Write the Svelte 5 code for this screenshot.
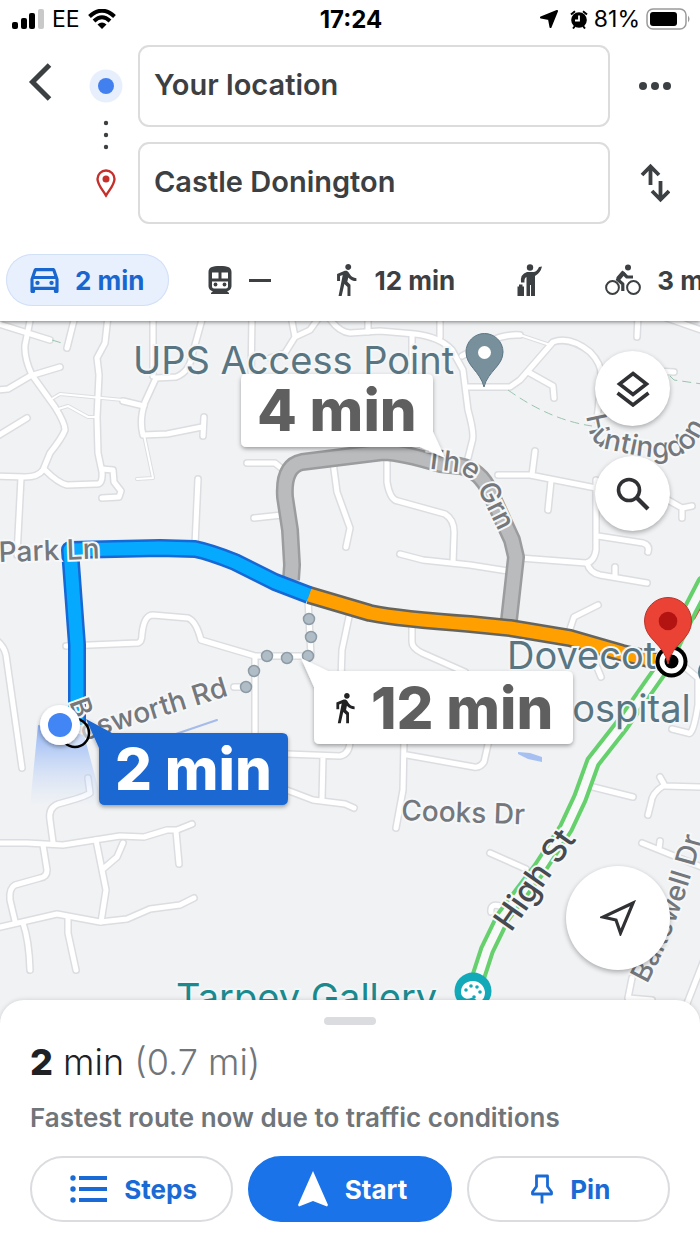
<script>
  let origin = $state('Your location');
  let destination = $state('Castle Donington');
  let mode = $state('drive');

  const modes = [
    { id: 'drive', name: 'Drive', time: '2 min' },
    { id: 'transit', name: 'Transit', time: '—' },
    { id: 'walk', name: 'Walk', time: '12 min' },
    { id: 'ride', name: 'Ride service', time: '' },
    { id: 'cycle', name: 'Cycle', time: '3 min' }
  ];

  const walker =
    'M13.5 5.5c1.1 0 2-.9 2-2s-.9-2-2-2-2 .9-2 2 .9 2 2 2zM9.8 8.9L7 23h2.1l1.8-8 2.1 2v6h2v-7.5l-2.1-2 .6-3C14.8 12 16.8 13 19 13v-2c-1.9 0-3.5-1-4.3-2.4l-1-1.6c-.4-.6-1-1-1.7-1-.3 0-.5.1-.8.1L6 8.3V13h2V9.6l1.8-.7';

  const streets = [
    'M-4 323L50 340',
    'M31 316L25 345Q24 358 32 375L55 407Q65 423 65 430Q62 438 50 453L43 470Q38 477 25 477L-4 476',
    'M75 316L67 348',
    'M-4 390L8 389L30 376L60 367',
    'M108 316L105 343L97 358L99 375L97 417L98 453L102 472Q103 485 96 484L67 485Q58 483 45 470',
    'M102 469L113 470L114 482L121 491L119 497L102 498',
    'M-4 437L27 418',
    'M21 478L17 555',
    'M153 316V376',
    'M203 316L193 352Q190 372 176 377L156 378L145 402Q139 420 143 435L167 434L202 427M204 417L203 436',
    'M123 401L144 406',
    'M198 479L195 545',
    'M252 316L251 380',
    'M291 316L295 337L310 330L320 316M295 337L285 353L270 358',
    'M328 316Q338 332 350 333L380 331L415 334Q440 337 452 350L463 370L468 410Q475 435 472 442L468 458',
    'M368 316V332M440 316V337M412 335V380',
    'M247 463H275L286 472',
    'M254 518L282 515',
    'M333 462L337 492L350 528L346 547',
    'M387 455V482Q390 500 398 501L445 514Q455 520 454 535L453 563',
    'M468 387H510L520 380L553 342Q570 336 590 352Q603 365 601 380L597 420',
    'M462 356L490 341Q505 334 520 335',
    'M528 372L553 386L554 398',
    'M638 316L637 337M661 316L704 331M655 371L674 372',
    'M498 475H530L596 488M535 451L532 475M551 481L548 510',
    'M596 480V550Q594 562 586 563L520 558M598 536L643 543Q650 545 648 552',
    'M668 500L682 508L692 506M682 508V518',
    'M400 554L423 560L470 565L508 571',
    'M587 563Q590 573 600 575L647 583M615 567V576',
    'M570 629L574 617L598 605M594 660L601 677',
    'M412 625V642Q412 648 422 653L465 672',
    'M66 646L138 643Q142 642 142 634Q144 615 153 615L188 618Q196 621 201 640L255 656H311L308 600M255 657V745',
    'M350 612L342 650L341 680M246 687H234',
    'M287 754L340 756Q350 754 350 740M323 757L322 800',
    'M284 789L313 800L345 804L354 808',
    'M404 740L403 790L396 828',
    'M407 755L474 767Q480 768 484 762L489 740',
    'M593 787L633 797',
    'M660 777L665 786L704 787M663 786Q652 793 651 803L648 815',
    'M686 668L698 678V705Q693 737 688 733L672 729',
    'M-4 640Q4 646 6 655L22 768',
    'M88 778L90 793Q85 797 58 804Q48 808 50 820L53 842',
    'M-4 843L27 843L63 845L120 836L144 837L167 830L177 830L192 824',
    'M43 845L47 870Q47 877 40 878L15 885Q9 888 10 900L15 921',
    'M-4 928L57 914L100 922L127 919L150 909L180 905L194 898',
    'M96 840L106 890L101 922M103 869L117 857L123 843M176 831L179 864',
    'M23 923Q29 940 30 970M68 917V933L76 970',
    'M490 853L526 869M642 843L704 868M660 841L659 849M491 912Q490 903 500 906',
    'M632 978L628 998L652 1000M704 960L686 1006'
  ];

  const lanes = [
    'M50 400L60 394L123 400',
    'M55 410L68 406L88 417H97',
    'M144 435L153 478L137 479',
    'M520 335L550 345',
    'M453 540L452 562'
  ];

  const greyRoute =
    'M291 580L292 565L290 530L285 497Q283 466 302 462L383 452Q400 452 440 464L460 466Q480 470 490 492L512 540L516 557L509 620';
  const blueRoute = 'M77 725V645L70 550L160 548L195 549Q210 552 235 562L275 582L309 595';
  const amberRoute = 'M309 595L370 613Q400 619 470 624L510 628L570 638L622 653L662 662';
  const highStreet = 'M704 583L690 610L662 668L622 725L593 762L580 798L566 828L540 868L503 917L487 950L474 990';

  const walkDots = [
    [309, 619],
    [311, 637],
    [308, 656],
    [287, 658],
    [267, 656],
    [254, 671],
    [246, 687]
  ];
</script>

<div class="screen">
  <header>
    <div class="status">
      <div class="status-left">
        <svg width="32" height="20" viewBox="0 0 32 20" aria-hidden="true">
          <rect x="0" y="13" width="6" height="7" rx="2" />
          <rect x="9" y="9" width="6" height="11" rx="2" />
          <rect x="17" y="4" width="6" height="16" rx="2" />
          <rect x="26" y="0" width="6" height="20" rx="2" fill="#c9c9c9" />
        </svg>
        <span>EE</span>
        <svg width="28" height="20" viewBox="0 0 28 20" fill="none" stroke="#000" stroke-width="4" aria-hidden="true">
          <path d="M1.500 7.500Q14-4 26.500 7.500" />
          <path d="M6 12Q14 4.500 22 12" />
          <path d="M9.500 15.500Q14 11.500 18.500 15.500L14 20Z" fill="#000" stroke="none" />
        </svg>
      </div>
      <strong>17:24</strong>
      <div class="status-right">
        <svg width="18" height="18" viewBox="0 0 18 18" aria-hidden="true"><path d="M17 1L10.500 17L9 9L1 7.500Z" stroke="#000" stroke-width="2" stroke-linejoin="round" /></svg>
        <svg width="18" height="19" viewBox="0 0 18 19" aria-hidden="true">
          <circle cx="9" cy="10" r="7.800" />
          <path d="M1 4.500L5 1.200M17 4.500L13 1.200M3 18.500L5 16M15 18.500L13 16" stroke="#000" stroke-width="2" />
          <path d="M9 5.500V10.500H5" fill="none" stroke="#fff" stroke-width="1.800" />
        </svg>
        <span>81%</span>
        <svg width="44" height="22" viewBox="0 0 44 22" aria-hidden="true">
          <rect x="1" y="1" width="39" height="20" rx="6" fill="none" stroke="#9a9a9a" stroke-width="1.500" />
          <rect x="4" y="4" width="27" height="14" rx="3" />
          <path d="M42 7.500Q45 11 42 14.500Z" fill="#9a9a9a" />
        </svg>
      </div>
    </div>

    <div class="directions">
      <button class="plain" aria-label="Back">
        <svg width="24" height="38" viewBox="0 0 24 38" fill="none" stroke="#3c4043" stroke-width="5"><path d="M21.500 2L4.500 19L21.500 36" /></svg>
      </button>
      <svg class="stops" width="34" height="136" viewBox="0 0 34 136" aria-hidden="true">
        <circle cx="17" cy="20" r="16.500" fill="#e8effc" />
        <circle cx="17" cy="20" r="8" fill="#4280f0" />
        <g fill="#3c4043">
          <circle cx="17" cy="57" r="2.200" /><circle cx="17" cy="69" r="2.200" /><circle cx="17" cy="81" r="2.200" />
        </g>
        <path d="M17 129.500C13 123 8.500 118.500 8.500 113A8.500 8.500 0 0 1 25.500 113C25.500 118.500 21 123 17 129.500Z" fill="none" stroke="#c5302b" stroke-width="2.400" />
        <circle cx="17" cy="113" r="3.500" fill="#c5302b" />
      </svg>
      <div class="fields">
        <input aria-label="Starting point" bind:value={origin} />
        <input aria-label="Destination" bind:value={destination} />
      </div>
      <div class="actions">
        <button class="plain" aria-label="More options">
          <svg width="34" height="10" viewBox="0 0 34 10" fill="#3c4043"><circle cx="5" cy="5" r="4" /><circle cx="17" cy="5" r="4" /><circle cx="29" cy="5" r="4" /></svg>
        </button>
        <button class="plain" aria-label="Swap start and destination">
          <svg width="30" height="40" viewBox="0 0 30 40" fill="none" stroke="#3c4043" stroke-width="3.800"><path d="M10.500 22V4M2 12L10.500 3.500L19 12M20.500 18V36M12 28L20.500 36.500L29 28" /></svg>
        </button>
      </div>
    </div>

    <nav aria-label="Travel mode">
      {#each modes as m}
        <button class="mode" class:active={mode === m.id} aria-label={m.name + ' ' + m.time} aria-pressed={mode === m.id} onclick={() => (mode = m.id)}>
          {#if m.id === 'drive'}
            <svg width="29" height="25" viewBox="3 5 18 16" fill="currentColor"><path d="M18.920 6.010C18.720 5.420 18.160 5 17.500 5h-11c-.66 0-1.210.42-1.420 1.010L3 12v8c0 .55.45 1 1 1h1c.55 0 1-.45 1-1v-1h12v1c0 .55.45 1 1 1h1c.55 0 1-.45 1-1v-8l-2.080-5.990zM6.850 7h10.290l1.080 3.110H5.770L6.850 7zM19 17H5v-5h14v5z" /><circle cx="7.500" cy="14.500" r="1.400" /><circle cx="16.500" cy="14.500" r="1.400" /></svg>
          {:else if m.id === 'transit'}
            <svg width="26" height="30" viewBox="0 0 26 30">
              <path d="M13 1C5 1 1.500 2.500 1.500 7V21C1.500 24 4 26 6 26L4 28V29H22V28L20 26C22 26 24.500 24 24.500 21V7C24.500 2.500 21 1 13 1Z" fill="currentColor" />
              <path d="M5 7.500H11.500V13.500H5ZM14.500 7.500H21V13.500H14.500ZM5 16.500H21V21.500Q21 23.500 19 23.500H7Q5 23.500 5 21.500Z" fill="#fff" />
              <circle cx="8.500" cy="19.500" r="1.900" fill="currentColor" /><circle cx="17.500" cy="19.500" r="1.900" fill="currentColor" />
            </svg>
          {:else if m.id === 'walk'}
            <svg width="26" height="32" viewBox="4 1.500 16 21.500" fill="currentColor"><path d={walker} /></svg>
          {:else if m.id === 'ride'}
            <svg width="26" height="33" viewBox="0 0 26 33" fill="currentColor">
              <circle cx="13" cy="3.500" r="3.200" />
              <path d="M10 8H17Q20 7.500 22 3L25 2.500Q23.500 9 18 12V32H14V21H13V32H9.500V13Q7 14 7.500 18.500H4Q3 10 10 8Z" />
              <path d="M.5 22.500H2V20.500H5.500V22.500H7V32H.5Z" />
            </svg>
          {:else}
            <svg width="36" height="32" viewBox="0 0 36 32" fill="none" stroke="currentColor">
              <circle cx="7.500" cy="23.500" r="6.400" stroke-width="2" /><circle cx="28.500" cy="23.500" r="6.400" stroke-width="2" />
              <circle cx="23" cy="3.500" r="3" fill="currentColor" stroke="none" />
              <path d="M17.800 27V20L12.500 15.500L18 9L22 13H28" stroke-width="3.200" stroke-linejoin="round" />
              <path d="M19 8L13 15" stroke-width="4.500" />
            </svg>
          {/if}
          {#if m.id === 'transit'}
            <span class="dash"></span>
          {:else if m.time}
            <span>{m.time}</span>
          {/if}
        </button>
      {/each}
    </nav>
  </header>

  <main>
    <svg class="map" viewBox="0 321 700 703" preserveAspectRatio="xMidYMid slice" role="img" aria-label="Route map">
      <defs>
        <linearGradient id="beam" x1="0" y1="0" x2="0" y2="1">
          <stop offset="0" stop-color="#8fb2f4" />
          <stop offset="1" stop-color="#c9dbfa" stop-opacity="0" />
        </linearGradient>
        <filter id="lift" x="-10%" y="-20%" width="120%" height="150%">
          <feDropShadow dx="0" dy="2" stdDeviation="2" flood-color="#000" flood-opacity="0.35" />
        </filter>
        <path id="grn" d="M424 468L456 472Q472 476 480 494L504 542" />
        <path id="hunt" d="M586 416L589 430Q592 444 606 449L634 455L660 458Q688 458 699 438L720 400" />
        <path id="bosworth" d="M84 741Q130 726 250 689" />
        <path id="bakewell" d="M647 984Q676 932 700 845L712 800" />
      </defs>

      <rect x="-700" y="0" width="2100" height="1400" fill="#f0f2f4" />

      <g fill="none" stroke-linecap="round" stroke-linejoin="round">
        {#each lanes as d}<path {d} stroke="#dddee1" stroke-width="4" />{/each}
        {#each streets as d}<path {d} stroke="#dcdde0" stroke-width="8" />{/each}
        {#each lanes as d}<path {d} stroke="#fff" stroke-width="2" />{/each}
        {#each streets as d}<path {d} stroke="#fff" stroke-width="5" />{/each}
        <path d="M508 390Q550 420 592 426M670 376L674 380L702 384M52 340L65 344" stroke="#9cc4ae" stroke-width="1" stroke-dasharray="9 5" stroke-linecap="butt" />
        <path d="M170 736L217 720" stroke="#a4bbec" stroke-width="2" />
        <path d="M518 752L530 753L542 757V762L528 759L518 754Z" fill="#a5c0f1" />
        <path d="M694 618L704 600" stroke="#e5433a" stroke-width="3" />
        <path d={highStreet} stroke="#65d06c" stroke-width="16" />
        <path d={highStreet} stroke="#f8faf9" stroke-width="8" />
        <path d={greyRoute} stroke="#9b9c9e" stroke-width="18" stroke-linecap="butt" />
        <path d={greyRoute} stroke="#babbbd" stroke-width="13" stroke-linecap="butt" />
        <path d={amberRoute} stroke="#66645e" stroke-width="18" stroke-linecap="butt" />
        <path d={blueRoute} stroke="#1767d4" stroke-width="18" stroke-linecap="butt" />
        <path d={amberRoute} stroke="#ff9f00" stroke-width="13" stroke-linecap="butt" />
        <path d={blueRoute} stroke="#05aaff" stroke-width="13" stroke-linecap="butt" />
      </g>

      <g fill="#b0bdc6" stroke="#8d9ba6" stroke-width="1.500">
        {#each walkDots as [cx, cy]}<circle {cx} {cy} r="5.500" />{/each}
      </g>

      <g class="place">
        <text x="133" y="374">UPS Access Point</text>
        <text x="507" y="669">Dovecote</text>
        <text x="544" y="722">Hospital</text>
        <text class="teal" x="176" y="1011">Tarpey Gallery</text>
      </g>
      <g class="street">
        <text x="-1" y="562" transform="rotate(-2 0 562)">Park Ln</text>
        <text x="401" y="820" transform="rotate(2 401 820)">Cooks Dr</text>
        <text x="69" y="702" transform="rotate(70 69 702)">B</text>
        <text><textPath href="#bosworth">osworth Rd</textPath></text>
        <text><textPath href="#grn">The Grn</textPath></text>
        <text><textPath href="#hunt">Huntingdon</textPath></text>
        <text><textPath href="#bakewell">Bakewell Dr</textPath></text>
        <text class="major" x="511" y="933" transform="rotate(-55 511 933)">High St</text>
      </g>

      <circle cx="712" cy="672" r="14" fill="#587a89" />
      <path d="M484 387C480 371 466 366 466 352A18.500 18.500 0 0 1 503 352C503 366 488 371 484 387Z" fill="#78909c" stroke="#5c7683" stroke-width="1" />
      <circle cx="484.500" cy="352.500" r="6.500" fill="#fff" />

      <circle cx="473" cy="991" r="18.500" fill="#12a9b9" />
      <path d="M473 981C465 981 461 986 461 992C461 998 467 1000 471 998C474 997 476 1001 479 1001C484 1001 485 995 485 992C484 985 479 981 473 981Z" fill="#fff" />
      <g fill="#12a9b9"><circle cx="466" cy="990" r="1.800" /><circle cx="471" cy="986" r="1.800" /><circle cx="477" cy="987" r="1.800" /><circle cx="480" cy="992" r="1.800" /><circle cx="474" cy="997" r="1.800" /></g>

      <circle cx="671.500" cy="661.500" r="16" />
      <circle cx="671.500" cy="661.500" r="9.500" fill="#000" stroke="#fff" stroke-width="5" />
      <path d="M668 664C664 643 644.500 640 644.500 621A23.500 23.500 0 0 1 691.500 621C691.500 640 672 643 668 664Z" fill="#ea4335" stroke="#b9352b" stroke-width="1" />
      <circle cx="668" cy="621" r="9.300" fill="#b31412" />

      <path d="M38 725L30 806H103L84 735Z" fill="url(#beam)" />
      <circle cx="75" cy="733" r="14" fill="#fff" fill-opacity="0.500" stroke="#000" stroke-width="2.500" />
      <g filter="url(#lift)"><circle cx="60" cy="725" r="20" fill="#fff" /></g>
      <circle cx="60" cy="725" r="12" fill="#4285f4" />

      <g class="callout" filter="url(#lift)">
        <path d="M247 374H427Q433 374 433 380V432L445 458L420 447H247Q241 447 241 441V380Q241 374 247 374Z" fill="#fff" />
        <text x="257" y="431">4 min</text>
      </g>
      <g class="callout" filter="url(#lift)">
        <path d="M328 671H567Q573 671 573 677V738Q573 744 567 744H320Q314 744 314 738V687L301 658Z" fill="#fff" />
        <text x="371" y="729">12 min</text>
        <path d={walker} transform="translate(328 691) scale(1.400)" fill="#202124" />
      </g>
      <g class="callout" filter="url(#lift)">
        <path d="M112 733H282Q288 733 288 739V799Q288 805 282 805H105Q99 805 99 799V748L86 719Z" fill="#1a67d2" />
        <text class="light" x="115" y="790">2 min</text>
      </g>
    </svg>

    <div class="tools">
      <button class="round" aria-label="Map layers">
        <svg width="34" height="36" viewBox="0 0 34 36" fill="none" stroke="#303134" stroke-width="3.600"><path d="M17 2.500L30.500 13L17 23.500L3.500 13ZM1.500 22L17 34L32.500 22" /></svg>
      </button>
      <button class="round" aria-label="Search along route">
        <svg width="34" height="34" viewBox="0 0 34 34" fill="none" stroke="#303134" stroke-width="3.600"><circle cx="13" cy="13" r="10.500" /><path d="M20.500 20.500L32 32" stroke-width="4.200" /></svg>
      </button>
    </div>
    <button class="round large" aria-label="Recentre">
      <svg width="36" height="36" viewBox="0 0 36 36" fill="none" stroke="#303134" stroke-width="3.200"><path d="M33 3L3 17L16 20L20.500 33Z" /></svg>
    </button>
  </main>

  <section class="sheet">
    <div class="handle"></div>
    <h1><b>2</b> min <span>(0.7 mi)</span></h1>
    <p>Fastest route now due to traffic conditions</p>
    <div class="buttons">
      <button>
        <svg width="38" height="30" viewBox="0 0 38 30" fill="currentColor"><circle cx="3" cy="4" r="2.700" /><circle cx="3" cy="15" r="2.700" /><circle cx="3" cy="26" r="2.700" /><path d="M9 2H37V6H9ZM9 13H37V17H9ZM9 24H37V28H9Z" /></svg>
        Steps
      </button>
      <button class="primary">
        <svg width="32" height="38" viewBox="0 0 32 38" fill="currentColor"><path d="M16 1L31 35L30 36.500L16 31L2 36.500L1 35Z" /></svg>
        Start
      </button>
      <button>
        <svg width="24" height="30" viewBox="0 0 24 30" fill="none" stroke="currentColor" stroke-width="2.800"><path d="M6.500 2H17.500V12.500L21.500 18V20H2.500V18L6.500 12.500ZM12 20V29.500" stroke-linejoin="round" /></svg>
        Pin
      </button>
    </div>
  </section>
</div>

<style>
  :global(body) {
    margin: 0;
    background: #fff;
  }

  .screen {
    display: flex;
    flex-direction: column;
    min-height: 100vh;
    overflow: hidden;
    font-family: Inter, 'Liberation Sans', sans-serif;
    color: #3c4043;
  }

  button {
    margin: 0;
    padding: 0;
    border: 0;
    background: none;
    font: inherit;
    color: inherit;
    cursor: pointer;
  }

  svg {
    display: block;
    flex: none;
  }

  header {
    position: relative;
    z-index: 1;
    background: #fff;
    box-shadow: 0 1px 4px rgba(0, 0, 0, 0.5);
  }

  .status {
    display: grid;
    grid-template-columns: 1fr auto 1fr;
    align-items: center;
    height: 38px;
    padding: 0 10px 0 12px;
    color: #000;
    font-size: 23px;
  }

  .status strong {
    font-size: 24px;
  }

  .status-left,
  .status-right {
    display: flex;
    align-items: center;
    gap: 8px;
  }

  .status-right {
    justify-content: flex-end;
    gap: 6px;
  }

  .status-right svg:first-child {
    margin-right: 6px;
  }

  .directions {
    display: grid;
    grid-template-columns: 61px 34px 1fr 90px;
    padding-left: 28px;
    padding-top: 7px;
  }

  .directions > .plain {
    align-self: start;
    padding-top: 18px;
    justify-self: start;
  }

  .stops {
    margin-top: 21px;
  }

  .fields {
    display: grid;
    gap: 15px;
    padding-left: 15px;
  }

  input {
    box-sizing: border-box;
    width: 100%;
    height: 82px;
    padding: 0 14px 4px;
    border: 2px solid #dcdcdd;
    border-radius: 11px;
    background: #fff;
    color: #3c4043;
    font: 600 29px Inter, 'Liberation Sans', sans-serif;
    outline: none;
  }

  .actions {
    display: grid;
    grid-template-rows: 82px 82px;
    gap: 15px;
    justify-items: center;
    align-items: center;
  }

  nav {
    display: flex;
    gap: 14px;
    padding: 30px 0 15px 6px;
    overflow: hidden;
  }

  .mode {
    display: flex;
    flex: none;
    align-items: center;
    gap: 16px;
    box-sizing: border-box;
    height: 52px;
    padding: 0 24px;
    border-radius: 26px;
    font-size: 26px;
    font-weight: 700;
  }

  .active {
    background: #e8f0fe;
    box-shadow: inset 0 0 0 1px #d2e0f6;
    color: #1a66cf;
  }

  .dash {
    width: 22px;
    height: 3px;
    background: currentColor;
  }

  main {
    position: relative;
    flex: 1;
    min-height: 480px;
    background: #f0f2f4;
  }

  .map {
    position: absolute;
    width: 100%;
    height: 100%;
  }

  .place text {
    font-size: 38px;
    fill: #587581;
    stroke: #f4f6f7;
    stroke-width: 4px;
    paint-order: stroke;
  }

  .place .teal {
    fill: #1b8a8f;
  }

  .street text {
    font-size: 28px;
    font-weight: 500;
    fill: #74787c;
    stroke: #f6f7f8;
    stroke-width: 4px;
    paint-order: stroke;
  }

  .street .major {
    font-size: 33px;
    fill: #474a4e;
  }

  .callout text {
    font-size: 58px;
    font-weight: 800;
    fill: #5f5f5f;
  }

  .callout .light {
    fill: #fff;
  }

  .tools {
    position: absolute;
    top: 30px;
    right: 30px;
    display: grid;
    gap: 30px;
  }

  .round {
    display: grid;
    place-items: center;
    width: 75px;
    height: 75px;
    border-radius: 50%;
    background: #fff;
    box-shadow: 0 2px 5px rgba(0, 0, 0, 0.3);
  }

  .large {
    position: absolute;
    right: 30px;
    bottom: 54px;
    width: 104px;
    height: 104px;
  }

  .sheet {
    position: relative;
    margin-top: -24px;
    padding: 17px 30px 23px;
    border-radius: 24px 24px 0 0;
    background: #fff;
    box-shadow: 0 0 5px rgba(0, 0, 0, 0.15);
  }

  .handle {
    width: 52px;
    height: 8px;
    margin: 0 auto;
    border-radius: 4px;
    background: #dadce0;
  }

  h1 {
    margin: 15px 0 0;
    color: #202124;
    font-size: 36px;
    font-weight: 300;
    line-height: 44px;
  }

  h1 b {
    font-weight: 800;
  }

  h1 span {
    color: #70757a;
  }

  p {
    margin: 18px 0 22px;
    color: #70757a;
    font-size: 26px;
    font-weight: 600;
    line-height: 32px;
  }

  .buttons {
    display: grid;
    grid-template-columns: repeat(3, 1fr);
    gap: 15px;
  }

  .buttons button {
    display: flex;
    align-items: center;
    justify-content: center;
    gap: 16px;
    box-sizing: border-box;
    height: 66px;
    padding-left: 4px;
    border: 2px solid #dadce0;
    border-radius: 33px;
    color: #1a6ad6;
    font-size: 26px;
    font-weight: 700;
  }

  .buttons .primary {
    border-color: #1a73e8;
    background: #1a73e8;
    color: #fff;
  }
</style>
